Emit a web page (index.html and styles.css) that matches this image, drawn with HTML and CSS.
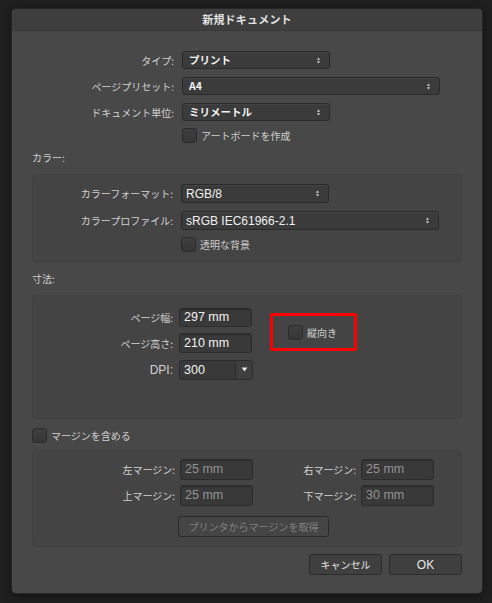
FILE: index.html
```html
<!DOCTYPE html>
<html lang="ja">
<head>
<meta charset="utf-8">
<title>新規ドキュメント</title>
<link rel="stylesheet" href="styles.css">
</head>
<body>
<div class="dialog">
  <div class="titlebar">新規ドキュメント</div>
  <div class="content">
    <div class="toprows">
      <div class="row">
        <span class="label w142">タイプ:</span>
        <div class="popup w148"><span>プリント</span><svg class="updown" viewBox="0 0 6 10" width="5" height="9"><path d="M3 1.5 L5 4 H1 Z M3 8.5 L5 6 H1 Z" fill="#cfcfcf"/></svg></div>
      </div>
      <div class="row">
        <span class="label w142">ページプリセット:</span>
        <div class="popup w258"><span>A4</span><svg class="updown" viewBox="0 0 6 10" width="5" height="9"><path d="M3 1.5 L5 4 H1 Z M3 8.5 L5 6 H1 Z" fill="#cfcfcf"/></svg></div>
      </div>
      <div class="row">
        <span class="label w142">ドキュメント単位:</span>
        <div class="popup w148"><span>ミリメートル</span><svg class="updown" viewBox="0 0 6 10" width="5" height="9"><path d="M3 1.5 L5 4 H1 Z M3 8.5 L5 6 H1 Z" fill="#cfcfcf"/></svg></div>
      </div>
      <div class="row checkrow indent150">
        <span class="checkbox"></span><span class="checktext">アートボードを作成</span>
      </div>
    </div>

    <div class="sectionlabel">カラー:</div>
    <div class="panel panel-color">
      <div class="row">
        <span class="label w140">カラーフォーマット:</span>
        <div class="popup w148 plain"><span>RGB/8</span><svg class="updown" viewBox="0 0 6 10" width="5" height="9"><path d="M3 1.5 L5 4 H1 Z M3 8.5 L5 6 H1 Z" fill="#cfcfcf"/></svg></div>
      </div>
      <div class="row">
        <span class="label w140">カラープロファイル:</span>
        <div class="popup w258 plain"><span>sRGB IEC61966-2.1</span><svg class="updown" viewBox="0 0 6 10" width="5" height="9"><path d="M3 1.5 L5 4 H1 Z M3 8.5 L5 6 H1 Z" fill="#cfcfcf"/></svg></div>
      </div>
      <div class="row checkrow indent148">
        <span class="checkbox"></span><span class="checktext">透明な背景</span>
      </div>
    </div>

    <div class="sectionlabel sec2">寸法:</div>
    <div class="panel panel-dim">
      <div class="dimcols">
        <div class="dimfields">
          <div class="row">
            <span class="label w140 g7">ページ幅:</span>
            <div class="field w73">297 mm</div>
          </div>
          <div class="row">
            <span class="label w140 g7">ページ高さ:</span>
            <div class="field w73 h20">210 mm</div>
          </div>
          <div class="row">
            <span class="label w140 g7 latin">DPI:</span>
            <div class="combo"><span class="combotext">300</span><span class="comboarrow"><svg viewBox="0 0 8 6" width="7" height="5"><path d="M0.5 0.5 H7.5 L4 5.5 Z" fill="#e8e8e8"/></svg></span></div>
          </div>
        </div>
        <div class="orient">
          <div class="redbox">
            <span class="checkbox"></span><span class="checktext">縦向き</span>
          </div>
        </div>
      </div>
    </div>

    <div class="row checkrow marginchk">
      <span class="checkbox"></span><span class="checktext">マージンを含める</span>
    </div>
    <div class="panel panel-margin">
      <div class="mgrid">
        <span class="label">左マージン:</span>
        <div class="field w73 h21 dis">25 mm</div>
        <span class="label">右マージン:</span>
        <div class="field w73 h21 dis">25 mm</div>
        <span class="label">上マージン:</span>
        <div class="field w73 h21 dis">25 mm</div>
        <span class="label">下マージン:</span>
        <div class="field w73 h21 dis">30 mm</div>
      </div>
      <div class="printerrow">
        <div class="btn disabled">プリンタからマージンを取得</div>
      </div>
    </div>

    <div class="buttons">
      <div class="btn action">キャンセル</div>
      <div class="btn action ok">OK</div>
    </div>
  </div>
</div>
</body>
</html>
```

FILE: styles.css
```css
* { box-sizing: border-box; }
html, body {
  margin: 0;
  padding: 0;
  background: #1f1f1f;
  width: 492px;
  height: 603px;
  overflow: hidden;
  font-family: "Liberation Sans", "Noto Sans CJK JP", sans-serif;
}
.dialog {
  margin: 9px 0 0 12px;
  width: 470px;
  height: 584px;
  background: #484848;
  border-radius: 4px;
  box-shadow: 0 0 0 1px #262626, 0 2px 8px rgba(0,0,0,0.5);
  overflow: hidden;
}
.titlebar {
  height: 22px;
  background: #3e3e3e;
  border-bottom: 1px solid #383838;
  color: #e2e2e2;
  font-family: "Noto Sans CJK JP", sans-serif;
  font-weight: 700;
  font-size: 11px;
  line-height: 21px;
  text-align: center;
  letter-spacing: 0.2px;
}
.content {
  padding: 20px 20px 0 20px;
}
.row {
  display: flex;
  align-items: center;
  gap: 8px;
}
.toprows .row { height: 18px; margin-bottom: 8px; }
.toprows .row.checkrow { height: 14px; margin-top: -1px; margin-bottom: 0; }
.label {
  color: #d2d2d2;
  font-family: "Noto Sans CJK JP", sans-serif;
  font-size: 10px;
  text-align: right;
  white-space: nowrap;
}
.label.latin {
  font-family: "Liberation Sans", sans-serif;
  font-size: 12px;
}
.w142 { width: 142px; }
.w140 { width: 140px; }
.g7 { margin-right: -1px; }
.popup {
  height: 18px;
  background: #3b3b3b;
  border: 1px solid #2a2a2a;
  border-radius: 3px;
  box-shadow: inset 0 1px 0 #444;
  display: flex;
  align-items: center;
  justify-content: space-between;
  padding: 0 6px 0 6px;
  color: #f0f0f0;
  font-family: "Noto Sans CJK JP", sans-serif;
  font-weight: 700;
  font-size: 10.5px;
}
.popup.plain {
  height: 19px;
  font-family: "Liberation Sans", sans-serif;
  font-weight: 400;
  font-size: 12px;
  padding-left: 4px;
}
.popup span { line-height: 1; }
.updown { margin-right: 2px; }
.w148 { width: 148px; }
.w258 { width: 258px; }
.w73 { width: 73px; }
.checkrow { gap: 4px; }
.indent150 { padding-left: 150px; }
.indent148 { padding-left: 148px; }
.checkbox {
  width: 15px;
  height: 15px;
  border-radius: 3px;
  background: linear-gradient(#3f3f3f, #363636);
  border: 1px solid #2b2b2b;
  flex: none;
}
.checktext {
  color: #cfcfcf;
  font-family: "Noto Sans CJK JP", sans-serif;
  font-size: 10px;
}
.sectionlabel {
  color: #cfcfcf;
  font-family: "Noto Sans CJK JP", sans-serif;
  font-size: 10px;
  margin-top: 10px;
  height: 12px;
  line-height: 12px;
}
.sec2 { margin-top: 10px; }
.panel {
  background: #444444;
  border: 1px solid #414141;
  border-radius: 4px;
  width: 430px;
}
.panel-color {
  margin-top: 10px;
  height: 89px;
  padding-top: 9px;
}
.panel-color .row { height: 19px; margin-bottom: 8px; }
.panel-color .row.checkrow { height: 15px; margin-top: -1px; margin-bottom: 0; }
.panel-dim {
  margin-top: 10px;
  height: 124px;
  padding-top: 12px;
}
.dimcols { display: flex; }
.dimfields .row { height: 19px; margin-bottom: 6px; gap: 7px; }
.dimfields .row:nth-child(2) { height: 20px; margin-bottom: 7px; }
.field {
  height: 19px;
  background: #393939;
  border: 1px solid #2c2c2c;
  border-radius: 3px;
  box-shadow: inset 0 1px 1px rgba(0,0,0,0.25);
  color: #f2f2f2;
  font-size: 12.5px;
  line-height: 17px;
  padding-left: 4px;
}
.h20 { height: 20px; line-height: 18px; }
.h21 { height: 21px; line-height: 19px; }
.field.dis { color: #939393; }
.combo {
  width: 74px;
  height: 20px;
  display: flex;
  background: #393939;
  border: 1px solid #2c2c2c;
  border-radius: 3px;
}
.combotext {
  flex: 1;
  color: #f2f2f2;
  font-size: 12.5px;
  line-height: 18px;
  padding-left: 4px;
}
.comboarrow {
  width: 17px;
  border-left: 1px solid #2c2c2c;
  background: #3e3e3e;
  display: flex;
  align-items: center;
  justify-content: center;
}
.orient { padding-left: 17px; padding-top: 5px; }
.redbox {
  width: 87px;
  height: 38px;
  border: 3px solid #ff0000;
  border-radius: 2px;
  display: flex;
  align-items: center;
  gap: 4px;
  padding-left: 15px;
}
.marginchk { margin-top: 9px; height: 15px; }
.panel-margin {
  margin-top: 7px;
  height: 97px;
  padding-top: 8px;
}
.mgrid {
  display: grid;
  grid-template-columns: 142px 73px 98px 73px;
  column-gap: 5px;
  row-gap: 5px;
  align-items: center;
}
.printerrow {
  padding-left: 145px;
  margin-top: 10px;
}
.btn {
  height: 21px;
  border: 1px solid #2b2b2b;
  border-radius: 3px;
  background: #414141;
  display: flex;
  align-items: center;
  justify-content: center;
  font-family: "Noto Sans CJK JP", sans-serif;
  font-size: 10px;
}
.btn.disabled {
  width: 151px;
  color: #808080;
  background: #454545;
}
.buttons {
  display: flex;
  justify-content: flex-end;
  gap: 7px;
  margin-top: 7px;
}
.btn.action {
  width: 73px;
  color: #e6e6e6;
  background: #3f3f3f;
}
.btn.ok { font-family: "Liberation Sans", sans-serif; font-size: 12px; }
```
